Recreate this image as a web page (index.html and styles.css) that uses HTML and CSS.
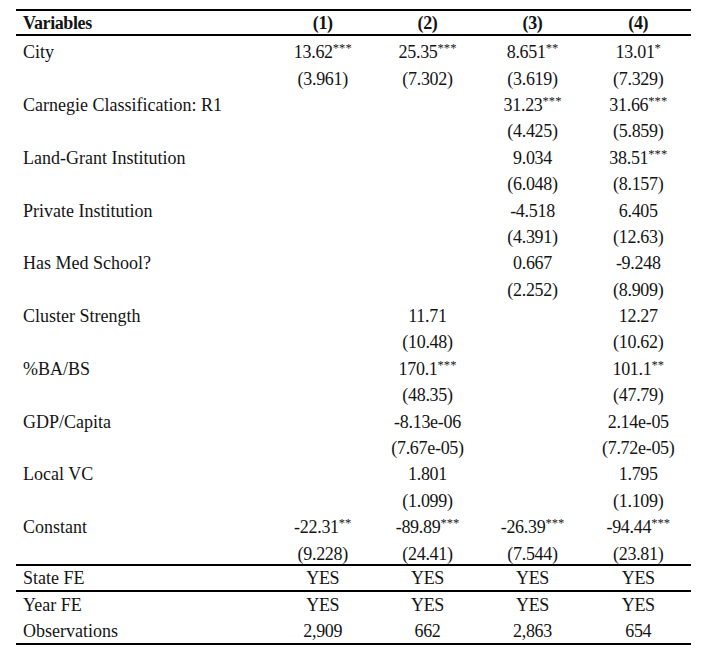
FILE: index.html
```html
<!DOCTYPE html>
<html lang="en">
<head>
<meta charset="utf-8">
<title>Regression table</title>
<link rel="stylesheet" href="styles.css">
</head>
<body>
<table class="reg">
  <colgroup>
    <col class="c-var"><col class="c1"><col class="c2"><col class="c3"><col class="c4">
  </colgroup>
  <thead>
    <tr><th class="var">Variables</th><th>(1)</th><th>(2)</th><th>(3)</th><th>(4)</th></tr>
  </thead>
  <tbody class="coef">
    <tr><td class="var">City</td><td>13.62<span class="s">***</span></td><td>25.35<span class="s">***</span></td><td>8.651<span class="s">**</span></td><td>13.01<span class="s">*</span></td></tr>
    <tr><td class="var"></td><td>(3.961)</td><td>(7.302)</td><td>(3.619)</td><td>(7.329)</td></tr>
    <tr><td class="var">Carnegie Classification: R1</td><td></td><td></td><td>31.23<span class="s">***</span></td><td>31.66<span class="s">***</span></td></tr>
    <tr><td class="var"></td><td></td><td></td><td>(4.425)</td><td>(5.859)</td></tr>
    <tr><td class="var">Land-Grant Institution</td><td></td><td></td><td>9.034</td><td>38.51<span class="s">***</span></td></tr>
    <tr><td class="var"></td><td></td><td></td><td>(6.048)</td><td>(8.157)</td></tr>
    <tr><td class="var">Private Institution</td><td></td><td></td><td>-4.518</td><td>6.405</td></tr>
    <tr><td class="var"></td><td></td><td></td><td>(4.391)</td><td>(12.63)</td></tr>
    <tr><td class="var">Has Med School?</td><td></td><td></td><td>0.667</td><td>-9.248</td></tr>
    <tr><td class="var"></td><td></td><td></td><td>(2.252)</td><td>(8.909)</td></tr>
    <tr><td class="var">Cluster Strength</td><td></td><td>11.71</td><td></td><td>12.27</td></tr>
    <tr><td class="var"></td><td></td><td>(10.48)</td><td></td><td>(10.62)</td></tr>
    <tr><td class="var">%BA/BS</td><td></td><td>170.1<span class="s">***</span></td><td></td><td>101.1<span class="s">**</span></td></tr>
    <tr><td class="var"></td><td></td><td>(48.35)</td><td></td><td>(47.79)</td></tr>
    <tr><td class="var">GDP/Capita</td><td></td><td>-8.13e-06</td><td></td><td>2.14e-05</td></tr>
    <tr><td class="var"></td><td></td><td>(7.67e-05)</td><td></td><td>(7.72e-05)</td></tr>
    <tr><td class="var">Local VC</td><td></td><td>1.801</td><td></td><td>1.795</td></tr>
    <tr><td class="var"></td><td></td><td>(1.099)</td><td></td><td>(1.109)</td></tr>
    <tr><td class="var">Constant</td><td>-22.31<span class="s">**</span></td><td>-89.89<span class="s">***</span></td><td>-26.39<span class="s">***</span></td><td>-94.44<span class="s">***</span></td></tr>
    <tr><td class="var"></td><td>(9.228)</td><td>(24.41)</td><td>(7.544)</td><td>(23.81)</td></tr>
  </tbody>
  <tbody class="foot">
    <tr class="state"><td class="var">State FE</td><td>YES</td><td>YES</td><td>YES</td><td>YES</td></tr>
    <tr class="year"><td class="var">Year FE</td><td>YES</td><td>YES</td><td>YES</td><td>YES</td></tr>
    <tr class="obs"><td class="var">Observations</td><td>2,909</td><td>662</td><td>2,863</td><td>654</td></tr>
  </tbody>
</table>
</body>
</html>
```

FILE: styles.css
```css
html, body {
  margin: 0;
  padding: 0;
  background: #ffffff;
}

body {
  padding: 9px 0 0 16px;
  font-family: "Liberation Serif", "Times New Roman", serif;
  font-size: 18px;
  color: #141414;
}

.reg {
  width: 675px;
  table-layout: fixed;
  border-collapse: separate;
  border-spacing: 0;
}

.c-var { width: 254px; }
.c1 { width: 105.5px; }
.c2 { width: 104px; }
.c3 { width: 106px; }
.c4 { width: 105.5px; }

.reg th,
.reg td {
  padding: 0;
  text-align: center;
  white-space: nowrap;
  vertical-align: top;
  letter-spacing: -0.3px;
}

.reg .var {
  text-align: left;
  padding-left: 7px;
  letter-spacing: 0;
}

.reg thead th {
  font-weight: bold;
  border-top: 2px solid #000;
  border-bottom: 2px solid #000;
  padding-top: 1.8px;
  line-height: 21.2px;
}

.reg thead th.var {
  letter-spacing: -0.4px;
}

.coef tr {
  height: 26.4px;
}

.coef td {
  padding-top: 6.2px;
  line-height: 20px;
}

.foot td {
  line-height: 20px;
}

.foot .state {
  height: 26px;
}

.foot .state td {
  border-top: 2px solid #000;
  padding-top: 1.9px;
}

.foot .year {
  height: 28px;
}

.foot .year td {
  border-top: 2px solid #000;
  padding-top: 2.9px;
}

.foot .obs {
  height: 27px;
}

.foot .obs td {
  border-bottom: 2px solid #000;
  padding-top: 2.9px;
}

.s {
  font-size: 0.7em;
  vertical-align: 0.45em;
  line-height: 0;
  letter-spacing: 0;
}
```
